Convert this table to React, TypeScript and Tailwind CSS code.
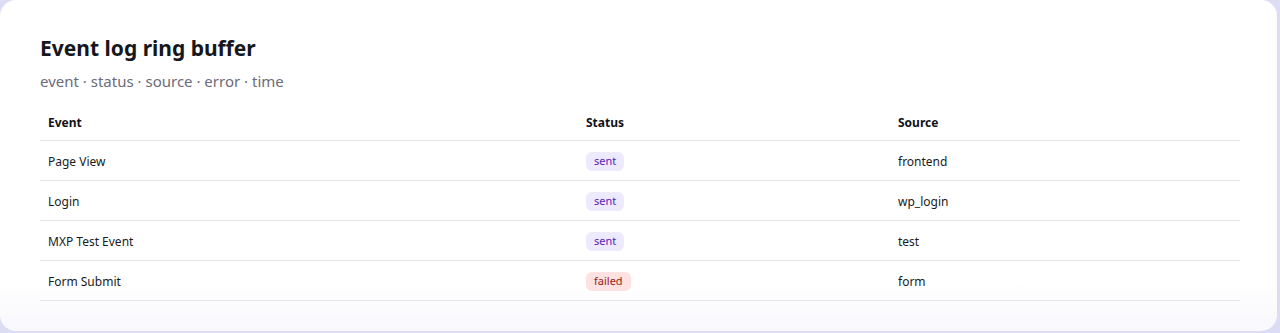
import React from "react";

const rows = [
  { event: "Page View", status: "sent", source: "frontend" },
  { event: "Login", status: "sent", source: "wp_login" },
  { event: "MXP Test Event", status: "sent", source: "test" },
  { event: "Form Submit", status: "failed", source: "form" },
];

export default function App() {
  return (
    <div
      className="w-[1280px] h-[333px] bg-[#dcdcf4] overflow-hidden"
      style={{ fontFamily: '"Noto Sans", "Open Sans", sans-serif' }}
    >
      <div className="w-[1277px] h-[331px] rounded-2xl bg-gradient-to-b from-white from-85% to-[#f8f8fd] px-10 pt-8">
        <h1 className="text-[21px] leading-8 font-bold text-[#16161d]">Event log ring buffer</h1>
        <p className="mt-1.5 text-[15px] leading-[22px] text-[#6b6b7b]">
          event · status · source · error · time
        </p>
        <div className="mt-3 w-[1200px] text-[12px] text-[#1a1a22]">
          <div className="grid grid-cols-[538px_312px_350px] h-[37px] items-center pt-0.5 border-b border-[#e4e4ea] font-bold text-[#111118]">
            <div className="px-2">Event</div>
            <div className="px-2">Status</div>
            <div className="px-2">Source</div>
          </div>
          {rows.map((r) => (
            <div
              key={r.event}
              className="grid grid-cols-[538px_312px_350px] h-[40px] items-center pt-0.5 border-b border-[#e4e4ea]"
            >
              <div className="px-2">{r.event}</div>
              <div className="px-2">
                {r.status === "sent" ? (
                  <span className="inline-flex h-[19px] items-center rounded-md bg-[#ede9fe] px-2 text-[11px] text-[#5b21b6]">
                    sent
                  </span>
                ) : (
                  <span className="inline-flex h-[19px] items-center rounded-md bg-[#fee2e2] px-2 text-[11px] text-[#991b1b]">
                    failed
                  </span>
                )}
              </div>
              <div className="px-2">{r.source}</div>
            </div>
          ))}
        </div>
      </div>
    </div>
  );
}
